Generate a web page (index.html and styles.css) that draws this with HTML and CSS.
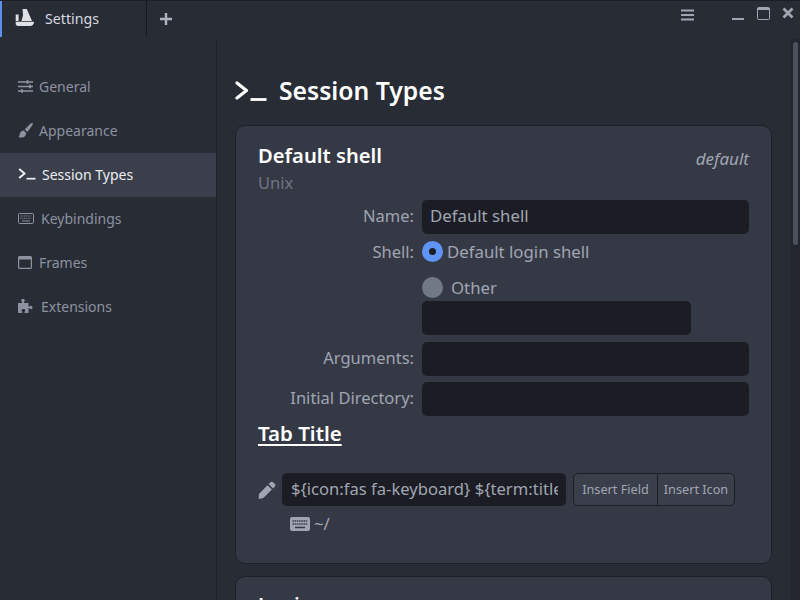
FILE: index.html
```html
<!DOCTYPE html>
<html lang="en">
<head>
<meta charset="utf-8">
<title>Settings</title>
<link rel="stylesheet" href="styles.css">
</head>
<body>
<div class="app">
  <header class="titlebar">
    <div class="tab">
      <svg class="tab-icon" viewBox="0 0 19 17"><path d="M7.600 0H11.800L17 12H6.400L8 6.500Z M.7 5.500H3.600V12H.7Z" fill="#dfe1e6"/><path d="M.7 12.700H19C19 15 17.500 17 15 17H3C1.500 17 .7 16 .7 14.500Z" fill="#dfe1e6"/></svg>
      <span class="tab-label">Settings</span>
    </div>
    <div class="add-tab"><svg viewBox="0 0 12 12" class="plus"><path d="M6 0v12M0 6h12" stroke="#aeb3bf" stroke-width="2.4"/></svg></div>
    <div class="spacer"></div>
    <div class="window-controls">
      <svg class="ctl-menu" viewBox="0 0 13 12"><path d="M0 1.500h13M0 6h13M0 10.500h13" stroke="#a0a5b2" stroke-width="2"/></svg>
      <svg class="ctl-min" viewBox="0 0 12 2"><path d="M0 1h12" stroke="#a0a5b2" stroke-width="2"/></svg>
      <svg class="ctl-max" viewBox="0 0 13 13"><rect x=".5" y=".5" width="12" height="12" rx="1" fill="none" stroke="#a0a5b2"/><path d="M0 2h13" stroke="#a0a5b2" stroke-width="2"/></svg>
      <svg class="ctl-close" viewBox="0 0 12 12"><path d="M1.500 1.500l9 9M10.500 1.500l-9 9" stroke="#a0a5b2" stroke-width="2.800"/></svg>
    </div>
  </header>
  <div class="body">
    <nav class="sidebar">
      <a class="nav-item"><svg class="ni i-general" viewBox="0 0 15 13"><path d="M0 2h15M0 6.500h15M0 11h15" stroke="currentColor" stroke-width="1.400"/><path d="M9.500 .3v3.400M12 4.800v3.400M4 9.300v3.400" stroke="currentColor" stroke-width="2"/></svg><span>General</span></a>
      <a class="nav-item"><svg class="ni i-brush" viewBox="0 0 15 15"><path d="M14.500 .3c.5.4.4 1 0 1.700L9.500 9 6.600 6.500 12.700 .6c.6-.5 1.300-.7 1.800-.3Z M5.600 7.500 8.300 10c-.2 2.500-2 4.500-4.500 4.600-1.500.1-3-.4-3.500-.8 1.300-.8 1.200-1.600 1.500-3 .3-1.800 2-3.100 3.800-3.300Z" fill="currentColor"/></svg><span>Appearance</span></a>
      <a class="nav-item active"><svg class="ni i-term" viewBox="0 0 18 12"><path d="M1.200 1 6.500 5.500 1.200 10" fill="none" stroke="currentColor" stroke-width="2"/><path d="M8.500 10.700h9" stroke="currentColor" stroke-width="1.700"/></svg><span>Session Types</span></a>
      <a class="nav-item"><svg class="ni i-kbd" viewBox="0 0 16 11"><rect x=".5" y=".5" width="15" height="10" rx="1" fill="none" stroke="currentColor"/><path d="M2.500 3h11M2.500 5.300h11" stroke="currentColor" stroke-dasharray="1 .8"/><path d="M4 8h8" stroke="currentColor"/></svg><span>Keybindings</span></a>
      <a class="nav-item"><svg class="ni i-frame" viewBox="0 0 14 13"><rect x=".6" y=".6" width="12.800" height="11.800" rx="1" fill="none" stroke="currentColor" stroke-width="1.200"/><path d="M0 2.200h14" stroke="currentColor" stroke-width="2.600"/></svg><span>Frames</span></a>
      <a class="nav-item"><svg class="ni i-ext" viewBox="0 0 16 14"><path d="M0 4h4V2.800C3.300 2.400 3.200 1.900 3.200 1.400 3.200 .5 4.100 0 5 0s1.800.5 1.800 1.400c0 .5-.1 1-.8 1.400V4h4.500v3.500h1c.4-.6.900-.8 1.400-.8.900 0 1.600.8 1.600 1.700s-.7 1.700-1.600 1.700c-.5 0-1-.2-1.400-.8h-1V14H6.500v-1.200c.6-.4.800-.8.800-1.300 0-.9-1-1.400-1.900-1.400s-1.900.5-1.900 1.400c0 .5.200.9.800 1.300V14H0Z" fill="currentColor"/></svg><span>Extensions</span></a>
    </nav>
    <main class="content">
      <h1 class="page-title"><svg class="title-icon" viewBox="0 0 32 20"><path d="M2 2 11.500 9.500 2 17" fill="none" stroke="#fff" stroke-width="3.200" stroke-linecap="round" stroke-linejoin="round"/><path d="M15.500 18.500h16" stroke="#fff" stroke-width="2.800"/></svg>Session Types</h1>
      <section class="card">
        <div class="card-head">
          <div>
            <div class="card-title">Default shell</div>
            <div class="card-sub">Unix</div>
          </div>
          <em class="default-tag">default</em>
        </div>
        <div class="form">
          <label class="lbl">Name:</label>
          <div class="input wide">Default shell</div>
          <label class="lbl lbl-shell">Shell:</label>
          <div class="shell-col">
            <div class="radio-row"><span class="radio on"></span><span class="r-text">Default login shell</span></div>
            <div class="radio-row second"><span class="radio"></span><span class="r-text other">Other</span></div>
            <div class="input narrow"></div>
          </div>
          <label class="lbl">Arguments:</label>
          <div class="input wide args"></div>
          <label class="lbl">Initial Directory:</label>
          <div class="input wide"></div>
        </div>
        <h2 class="section-title">Tab Title</h2>
        <div class="title-row">
          <svg class="pencil" viewBox="0 0 18 18"><path d="M12.500 1.200c.7-.7 1.800-.7 2.500 0l1.900 1.900c.7.7.7 1.800 0 2.500L15 7.500 10.600 3.100Z M9.500 4.200l4.400 4.400L5.400 17 .6 17.900 1 13Z" fill="#a0a5b2"/></svg>
          <div class="input title-input"><span class="clip">${icon:fas fa-keyboard} ${term:title}</span></div>
          <div class="btn-group"><button class="btn">Insert Field</button><button class="btn">Insert Icon</button></div>
        </div>
        <div class="preview">
          <svg class="pv-kbd" viewBox="0 0 20 14"><path d="M2 0H18A2 2 0 0 1 20 2V12A2 2 0 0 1 18 14H2A2 2 0 0 1 0 12V2A2 2 0 0 1 2 0Z" fill="#a0a5b2"/><path d="M2.500 4h15M2.500 7h15" stroke="#353945" stroke-width="1.500" stroke-dasharray="1.500 .7"/><path d="M5 10.500h10" stroke="#353945" stroke-width="1.500"/></svg>
          <span>~/</span>
        </div>
      </section>
      <section class="card next">
        <div class="card-title">Login</div>
      </section>
    </main>
    <div class="scrollbar"><div class="thumb"></div></div>
  </div>
</div>
</body>
</html>
```
FILE: styles.css
```css
* { box-sizing: border-box; }
html, body { margin: 0; height: 100%; overflow: hidden; }
body { background: #282c35; color: #a0a5b2; font-family: "Noto Sans", "Open Sans", sans-serif; font-size: 15px; }
.app { width: 800px; height: 600px; display: flex; flex-direction: column; overflow: hidden; border-top: 1px solid #1d1f26; }
.titlebar { height: 38px; display: flex; flex: none; }
.tab { width: 147px; height: 36px; display: flex; align-items: center; border-left: 2px solid #5a8ff0; border-right: 1px solid #17191e; padding-left: 13px; color: #d6d9e0; }
.tab-icon { width: 19px; height: 17px; margin-top: -3px; }
.tab-label { margin: -2px 0 0 11px; font-size: 14.2px; }
.add-tab { width: 38px; height: 36px; display: flex; align-items: center; justify-content: center; }
.plus { width: 12px; height: 12px; }
.spacer { flex: 1; }
.window-controls { width: 120px; display: flex; align-items: flex-start; padding-top: 6px; padding-left: 1px; }
.ctl-menu { width: 13px; height: 12px; margin-top: 2px; }
.ctl-min { width: 12px; height: 2px; margin-left: 38px; margin-top: 11px; }
.ctl-max { width: 13px; height: 13px; margin-left: 13px; }
.ctl-close { width: 12px; height: 12px; margin-left: 12px; }
.body { flex: 1; display: flex; min-height: 0; }
.sidebar { width: 217px; flex: none; border-right: 1px solid #1d1f26; padding-top: 26px; }
.nav-item { height: 44px; display: flex; align-items: center; padding: 0 0 2px 18px; color: #8d92a0; font-size: 14px; }
.nav-item.active { background: #3a3f4b; color: #eceef2; }
.ni { flex: none; margin-right: 6px; }
.i-general { width: 15px; height: 13px; }
.i-brush { width: 15px; height: 15px; }
.i-term { width: 18px; height: 12px; margin-right: 6px; }
.i-kbd { width: 16px; height: 11px; margin-right: 7px; }
.i-frame { width: 14px; height: 13px; margin-right: 7px; }
.i-ext { width: 16px; height: 14px; margin-right: 7px; }
.content { flex: 1; min-width: 0; padding: 0 0 0 18px; overflow: hidden; }
.page-title { margin: 32px 0 0; height: 54px; display: flex; align-items: flex-start; font-size: 24.7px; line-height: 40px; font-weight: 600; color: #fff; }
.title-icon { width: 32px; height: 20px; margin-top: 10px; margin-right: 12px; }
.card { width: 537px; height: 439px; background: #353945; border: 1px solid #1d1f26; border-radius: 10px; padding: 17px 22px 0 22px; }
.card.next { margin-top: 12px; height: 60px; padding-top: 15px; }
.card-head { display: flex; justify-content: space-between; }
.card-title { font-size: 20.2px; line-height: 24px; font-weight: 600; color: #fff; }
.card-sub { font-size: 16.5px; line-height: 22px; color: #6f7482; margin-top: 5px; }
.default-tag { font-size: 17px; line-height: 32px; color: #a0a5b2; }
.form { display: grid; grid-template-columns: 156px 1fr; column-gap: 8px; margin-top: 6px; }
.lbl { text-align: right; font-size: 16.5px; line-height: 32px; }
.lbl-shell { line-height: 22px; }
.input { background: #1c1d24; border-radius: 5px; height: 34px; line-height: 32px; padding: 0 8px; font-size: 16.8px; color: #a0a5b2; }
.wide { width: 327px; }
.narrow { width: 269px; }
.form .wide { margin-bottom: 7px; }
.form .args { margin-bottom: 6px; }
.shell-col { display: flex; flex-direction: column; margin-bottom: 7px; }
.radio-row { display: flex; align-items: center; height: 21px; }
.radio-row.second { margin: 15px 0 3px; }
.radio { width: 21px; height: 21px; border-radius: 50%; background: #737885; flex: none; }
.radio.on { background: #5f94f4; position: relative; }
.radio.on::after { content: ""; position: absolute; left: 7px; top: 7px; width: 7px; height: 7px; border-radius: 50%; background: #1c1d24; }
.r-text { margin-left: 4px; font-size: 16.8px; }
.r-text.other { margin-left: 8px; }
.section-title { margin: -5px 0 0; font-size: 20.5px; line-height: 30px; font-weight: 600; color: #fff; text-decoration: underline; text-underline-offset: 3px; }
.title-row { display: flex; align-items: center; margin-top: 25px; }
.pencil { width: 18px; height: 18px; margin-right: 6px; }
.title-input { width: 284px; height: 33px; padding: 0 8px 0 9px; font-size: 16.6px; }
.clip { display: block; overflow: hidden; white-space: nowrap; }
.btn-group { display: flex; margin-left: 7px; border: 1px solid #1d1f26; border-radius: 5px; height: 33px; background: #3a3f4b; overflow: hidden; }
.btn { font: inherit; font-size: 12.7px; color: #a0a5b2; background: none; border: 0; padding: 0 0 2px; height: 31px; width: 83px; }
.btn + .btn { width: 77px; border-left: 1px solid #1d1f26; }
.preview { display: flex; align-items: center; margin: 6px 0 0 32px; font-size: 16.8px; }
.pv-kbd { width: 20px; height: 14px; margin-right: 4px; }
.scrollbar { width: 9px; flex: none; background: #23262e; }
.thumb { width: 5px; height: 203px; margin: 3px 0 0 2px; background: #4b505c; border-radius: 3px; }
```
